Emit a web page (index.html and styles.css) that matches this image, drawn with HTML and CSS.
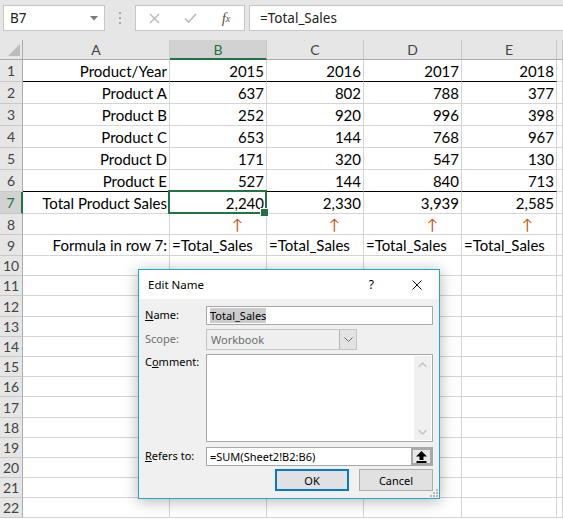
FILE: index.html
```html
<!DOCTYPE html>
<html lang="en">
<head>
  <meta charset="UTF-8">
  <title>Edit Name</title>
  <link rel="stylesheet" href="styles.css">
</head>
<body>
  <div class="formula-bar">
    <div class="name-box">
      <span>B7</span>
      <svg width="8" height="5" viewBox="0 0 8 5"><path d="M0 0h8L4 4.5z" fill="#7a7a7a"/></svg>
    </div>
    <div class="grip"><i></i><i></i><i></i></div>
    <div class="fx-box">
      <span class="slot"><svg width="11" height="11" viewBox="0 0 11 11"><path d="M1 1l9 9M10 1l-9 9" stroke="#b8b8b8" stroke-width="1.4"/></svg></span>
      <span class="slot"><svg width="13" height="10" viewBox="0 0 13 10"><path d="M1 5.5l3.5 3.5L12 1" stroke="#b8b8b8" stroke-width="1.6" fill="none"/></svg></span>
      <span class="slot fx">f<sub>x</sub></span>
    </div>
    <div class="formula-input">=Total_Sales</div>
  </div>

  <div class="sheet">
    <div class="row hdr">
      <div class="corner"></div>
      <div class="h">A</div>
      <div class="h sel">B</div>
      <div class="h">C</div>
      <div class="h">D</div>
      <div class="h">E</div>
      <div class="h"></div>
    </div>
    <div class="row r22">
      <div class="rh">1</div>
      <div class="c bb">Product/Year</div>
      <div class="c bb">2015</div>
      <div class="c bb">2016</div>
      <div class="c bb">2017</div>
      <div class="c bb">2018</div>
      <div class="c"></div>
    </div>
    <div class="row r22">
      <div class="rh">2</div>
      <div class="c">Product A</div>
      <div class="c">637</div>
      <div class="c">802</div>
      <div class="c">788</div>
      <div class="c">377</div>
      <div class="c"></div>
    </div>
    <div class="row r22">
      <div class="rh">3</div>
      <div class="c">Product B</div>
      <div class="c">252</div>
      <div class="c">920</div>
      <div class="c">996</div>
      <div class="c">398</div>
      <div class="c"></div>
    </div>
    <div class="row r22">
      <div class="rh">4</div>
      <div class="c">Product C</div>
      <div class="c">653</div>
      <div class="c">144</div>
      <div class="c">768</div>
      <div class="c">967</div>
      <div class="c"></div>
    </div>
    <div class="row r22">
      <div class="rh">5</div>
      <div class="c">Product D</div>
      <div class="c">171</div>
      <div class="c">320</div>
      <div class="c">547</div>
      <div class="c">130</div>
      <div class="c"></div>
    </div>
    <div class="row r22">
      <div class="rh">6</div>
      <div class="c bb">Product E</div>
      <div class="c bb">527</div>
      <div class="c bb">144</div>
      <div class="c bb">840</div>
      <div class="c bb">713</div>
      <div class="c"></div>
    </div>
    <div class="row r22">
      <div class="rh sel">7</div>
      <div class="c">Total Product Sales</div>
      <div class="c active">2,240</div>
      <div class="c">2,330</div>
      <div class="c">3,939</div>
      <div class="c">2,585</div>
      <div class="c"></div>
    </div>
    <div class="row r21">
      <div class="rh">8</div>
      <div class="c"></div>
      <div class="c up">&uarr;</div>
      <div class="c up">&uarr;</div>
      <div class="c up">&uarr;</div>
      <div class="c up">&uarr;</div>
      <div class="c"></div>
    </div>
    <div class="row r21">
      <div class="rh">9</div>
      <div class="c">Formula in row 7:</div>
      <div class="c l">=Total_Sales</div>
      <div class="c l">=Total_Sales</div>
      <div class="c l">=Total_Sales</div>
      <div class="c l">=Total_Sales</div>
      <div class="c"></div>
    </div>
    <div class="row"><div class="rh">10</div><div class="c"></div><div class="c"></div><div class="c"></div><div class="c"></div><div class="c"></div><div class="c"></div></div>
    <div class="row"><div class="rh">11</div><div class="c"></div><div class="c"></div><div class="c"></div><div class="c"></div><div class="c"></div><div class="c"></div></div>
    <div class="row r21"><div class="rh">12</div><div class="c"></div><div class="c"></div><div class="c"></div><div class="c"></div><div class="c"></div><div class="c"></div></div>
    <div class="row"><div class="rh">13</div><div class="c"></div><div class="c"></div><div class="c"></div><div class="c"></div><div class="c"></div><div class="c"></div></div>
    <div class="row"><div class="rh">14</div><div class="c"></div><div class="c"></div><div class="c"></div><div class="c"></div><div class="c"></div><div class="c"></div></div>
    <div class="row"><div class="rh">15</div><div class="c"></div><div class="c"></div><div class="c"></div><div class="c"></div><div class="c"></div><div class="c"></div></div>
    <div class="row"><div class="rh">16</div><div class="c"></div><div class="c"></div><div class="c"></div><div class="c"></div><div class="c"></div><div class="c"></div></div>
    <div class="row r21"><div class="rh">17</div><div class="c"></div><div class="c"></div><div class="c"></div><div class="c"></div><div class="c"></div><div class="c"></div></div>
    <div class="row"><div class="rh">18</div><div class="c"></div><div class="c"></div><div class="c"></div><div class="c"></div><div class="c"></div><div class="c"></div></div>
    <div class="row"><div class="rh">19</div><div class="c"></div><div class="c"></div><div class="c"></div><div class="c"></div><div class="c"></div><div class="c"></div></div>
    <div class="row"><div class="rh">20</div><div class="c"></div><div class="c"></div><div class="c"></div><div class="c"></div><div class="c"></div><div class="c"></div></div>
    <div class="row"><div class="rh">21</div><div class="c"></div><div class="c"></div><div class="c"></div><div class="c"></div><div class="c"></div><div class="c"></div></div>
    <div class="row"><div class="rh">22</div><div class="c"></div><div class="c"></div><div class="c"></div><div class="c"></div><div class="c"></div><div class="c"></div></div>
  </div>

  <div class="dialog">
    <div class="dlg-title">
      <span class="title">Edit Name</span>
      <span class="help">?</span>
      <svg class="close" width="10" height="10" viewBox="0 0 10 10"><path d="M0.5 0.5l9 9M9.5 0.5l-9 9" stroke="#111" stroke-width="1"/></svg>
    </div>
    <div class="dlg-body">
      <div class="field">
        <label><u>N</u>ame:</label>
        <div class="input"><span class="selected">Total_Sales</span></div>
      </div>
      <div class="field scope">
        <label class="disabled">Scope:</label>
        <div class="select">
          <span>Workbook</span>
          <div class="drop"><svg width="9" height="5" viewBox="0 0 9 5"><path d="M0.5 0.5l4 4 4-4" stroke="#666" fill="none"/></svg></div>
        </div>
      </div>
      <div class="field comment">
        <label>C<u>o</u>mment:</label>
        <div class="textarea">
          <div class="vscroll">
            <svg width="9" height="6" viewBox="0 0 9 6"><path d="M0.5 5l4-4 4 4" stroke="#c4c4c4" stroke-width="1.5" fill="none"/></svg>
            <svg width="9" height="6" viewBox="0 0 9 6"><path d="M0.5 1l4 4 4-4" stroke="#c4c4c4" stroke-width="1.5" fill="none"/></svg>
          </div>
        </div>
      </div>
      <div class="field refers">
        <label><u>R</u>efers to:</label>
        <div class="input">
          <span>=SUM(Sheet2!B2:B6)</span>
          <div class="collapse"><svg width="11" height="12" viewBox="0 0 11 12"><path d="M5.5 0L11 5.5H7.5V9h-4V5.5H0z" fill="#000"/><rect x="0.5" y="10" width="10" height="2" fill="#000"/></svg></div>
        </div>
      </div>
      <div class="buttons">
        <button class="btn default">OK</button>
        <button class="btn">Cancel</button>
      </div>
    </div>
    <svg class="resize" width="9" height="9" viewBox="0 0 9 9">
      <rect x="7" y="1" width="2" height="2" fill="#b8b8b8"/>
      <rect x="4" y="4" width="2" height="2" fill="#b8b8b8"/>
      <rect x="7" y="4" width="2" height="2" fill="#b8b8b8"/>
      <rect x="1" y="7" width="2" height="2" fill="#b8b8b8"/>
      <rect x="4" y="7" width="2" height="2" fill="#b8b8b8"/>
      <rect x="7" y="7" width="2" height="2" fill="#b8b8b8"/>
    </svg>
  </div>
</body>
</html>
```

FILE: styles.css
```css
* {margin: 0; padding: 0; box-sizing: border-box;}
body {width: 563px; height: 519px; overflow: hidden; position: relative; background: #fff; font-family: Lato, "Liberation Sans", sans-serif; color: #000;}

/* formula bar */
.formula-bar {height: 40px; background: #e6e6e6; display: flex; align-items: flex-start; padding: 5px 0 0 3px; font-family: "Noto Sans", sans-serif; color: #222;}
.name-box {width: 102px; height: 26px; background: #fff; border: 1px solid #c6c6c6; display: flex; align-items: center; justify-content: space-between; padding: 0 6px 0 6px; font-size: 13.5px;}
.grip {width: 30px; height: 26px; display: flex; flex-direction: column; align-items: center; justify-content: center; gap: 3px;}
.grip i {display: block; width: 2px; height: 2px; background: #a8a8a8;}
.fx-box {width: 110px; height: 26px; background: #fff; border: 1px solid #c6c6c6; display: flex; align-items: center; margin-left: 0;}
.slot {width: 37px; display: flex; justify-content: center; align-items: center;}
.fx {font-family: "Liberation Serif", serif; font-style: italic; font-size: 15px; color: #555;}
.fx sub {font-size: 10px; vertical-align: -1px;}
.formula-input {flex: 1; height: 26px; margin: 0 -2px 0 4px; background: #fff; border: 1px solid #c6c6c6; padding-left: 10px; display: flex; align-items: center; font-size: 13.5px;}

/* sheet */
.row {display: grid; grid-template-columns: 23px 147px 97px 97px 98px 95px 1fr; height: 20px;}
.r22 {height: 22px;}
.r21 {height: 21px;}
.hdr {height: 20px;}
.corner {background: #e6e6e6; border-right: 1px solid #ababab; border-bottom: 1px solid #ababab; position: relative;}
.corner::after {content: ""; position: absolute; right: 2px; bottom: 3px; border-left: 12px solid transparent; border-bottom: 12px solid #bcbcbc;}
.h {background: #e6e6e6; border-right: 1px solid #c8c8c8; border-bottom: 1px solid #ababab; display: flex; align-items: center; justify-content: center; font-size: 14px; color: #444;}
.h.sel {background: #d2d2d2; border-bottom: 2px solid #217346; color: #217346;}
.rh {background: #e6e6e6; border-right: 1px solid #ababab; border-bottom: 1px solid #c8c8c8; display: flex; align-items: center; justify-content: center; font-size: 14px; color: #444;}
.rh.sel {background: #d2d2d2; border-right: 2px solid #217346; color: #217346;}
.c {position: relative; border-right: 1px solid #d4d4d4; border-bottom: 1px solid #d4d4d4; display: flex; align-items: center; justify-content: flex-end; padding: 0 2px; font-size: 15px; white-space: nowrap;}
.c.l {justify-content: flex-start;}
.c.bb {border-bottom-color: #000;}
.c.up {color: #c65911; padding-right: 23px;}
.c.active::before {content: ""; position: absolute; left: -2px; top: -2px; right: -1px; bottom: -1px; border: 2px solid #217346; z-index: 2;}
.c.active::after {content: ""; position: absolute; right: -3px; bottom: -4px; width: 7px; height: 7px; background: #217346; border: 1px solid #fff; z-index: 3;}

/* dialog */
.dialog {position: absolute; left: 138px; top: 269px; width: 302px; height: 230px; border: 1px solid #27a5c3; background: #f0f0f0; box-shadow: 0 2px 14px rgba(0,0,0,0.3); font-family: "Noto Sans", sans-serif; font-size: 11px; color: #000; z-index: 10;}
.dlg-title {height: 29px; background: #fff; display: flex; align-items: center; padding-left: 9px; font-size: 11.5px;}
.title {flex: 1;}
.help {font-size: 12px; margin-right: 38px;}
.close {margin-right: 17px;}
.dlg-body {padding: 7px 5px 0 6px;}
.field {display: flex; align-items: center; margin-bottom: 4px;}
.field label {width: 61px; padding-bottom: 2px;}
.field label.disabled {color: #6d6d6d;}
.input {width: 227px; height: 19px; background: #fff; border: 1px solid #a8a8a8; display: flex; align-items: center; padding-left: 3px;}
.selected {background: #cccccc; line-height: 15px;}
.select {width: 151px; height: 21px; background: #efefef; border: 1px solid #c4c4c4; display: flex; align-items: center; padding-left: 4px; color: #6d6d6d;}
.select span {flex: 1;}
.drop {width: 17px; height: 19px; background: #e3e3e3; border-left: 1px solid #b4b4b4; display: flex; align-items: center; justify-content: center;}
.comment {align-items: flex-start; margin-bottom: 5px;}
.comment label {line-height: 15px; padding: 0;}
.textarea {width: 227px; height: 88px; background: #fff; border: 1px solid #a8a8a8; display: flex; justify-content: flex-end; padding: 1px;}
.vscroll {width: 17px; background: #f0f0f0; display: flex; flex-direction: column; justify-content: space-between; align-items: center; padding: 6px 0 5px;}
.refers {margin-bottom: 3px;}
.refers .input span {flex: 1;}
.collapse {width: 21px; height: 17px; background: #e8e8e8; border: 2px solid #a8a8a8; display: flex; align-items: center; justify-content: center;}
.buttons {display: flex; justify-content: flex-end; gap: 10px; padding-right: 1px;}
.btn {width: 74px; height: 22px; background: #e1e1e1; border: 1px solid #adadad; font-family: "Noto Sans", sans-serif; font-size: 11px; color: #000;}
.btn.default {border: 2px solid #0078d7;}
.resize {position: absolute; right: 1px; bottom: 1px;}
```
